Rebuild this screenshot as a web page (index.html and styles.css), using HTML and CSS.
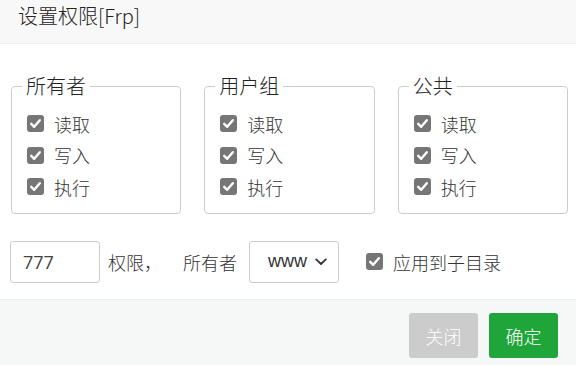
FILE: index.html
```html
<!DOCTYPE html>
<html lang="zh">
<head>
<meta charset="utf-8">
<link rel="stylesheet" href="styles.css">
</head>
<body>
<div class="dialog">
  <div class="header">设置权限[Frp]</div>
  <div class="content">
    <div class="groups">
      <fieldset class="group">
        <legend>所有者</legend>
        <div class="rows">
          <label class="row"><span class="cb"><svg viewBox="0 0 17 17" width="17" height="17"><path d="M4.2 8.8 L7.2 11.8 L12.8 5.2" fill="none" stroke="#fff" stroke-width="2.4" stroke-linecap="round" stroke-linejoin="round"/></svg></span>读取</label>
          <label class="row"><span class="cb"><svg viewBox="0 0 17 17" width="17" height="17"><path d="M4.2 8.8 L7.2 11.8 L12.8 5.2" fill="none" stroke="#fff" stroke-width="2.4" stroke-linecap="round" stroke-linejoin="round"/></svg></span>写入</label>
          <label class="row"><span class="cb"><svg viewBox="0 0 17 17" width="17" height="17"><path d="M4.2 8.8 L7.2 11.8 L12.8 5.2" fill="none" stroke="#fff" stroke-width="2.4" stroke-linecap="round" stroke-linejoin="round"/></svg></span>执行</label>
        </div>
      </fieldset>
      <fieldset class="group">
        <legend>用户组</legend>
        <div class="rows">
          <label class="row"><span class="cb"><svg viewBox="0 0 17 17" width="17" height="17"><path d="M4.2 8.8 L7.2 11.8 L12.8 5.2" fill="none" stroke="#fff" stroke-width="2.4" stroke-linecap="round" stroke-linejoin="round"/></svg></span>读取</label>
          <label class="row"><span class="cb"><svg viewBox="0 0 17 17" width="17" height="17"><path d="M4.2 8.8 L7.2 11.8 L12.8 5.2" fill="none" stroke="#fff" stroke-width="2.4" stroke-linecap="round" stroke-linejoin="round"/></svg></span>写入</label>
          <label class="row"><span class="cb"><svg viewBox="0 0 17 17" width="17" height="17"><path d="M4.2 8.8 L7.2 11.8 L12.8 5.2" fill="none" stroke="#fff" stroke-width="2.4" stroke-linecap="round" stroke-linejoin="round"/></svg></span>执行</label>
        </div>
      </fieldset>
      <fieldset class="group">
        <legend>公共</legend>
        <div class="rows">
          <label class="row"><span class="cb"><svg viewBox="0 0 17 17" width="17" height="17"><path d="M4.2 8.8 L7.2 11.8 L12.8 5.2" fill="none" stroke="#fff" stroke-width="2.4" stroke-linecap="round" stroke-linejoin="round"/></svg></span>读取</label>
          <label class="row"><span class="cb"><svg viewBox="0 0 17 17" width="17" height="17"><path d="M4.2 8.8 L7.2 11.8 L12.8 5.2" fill="none" stroke="#fff" stroke-width="2.4" stroke-linecap="round" stroke-linejoin="round"/></svg></span>写入</label>
          <label class="row"><span class="cb"><svg viewBox="0 0 17 17" width="17" height="17"><path d="M4.2 8.8 L7.2 11.8 L12.8 5.2" fill="none" stroke="#fff" stroke-width="2.4" stroke-linecap="round" stroke-linejoin="round"/></svg></span>执行</label>
        </div>
      </fieldset>
    </div>
    <div class="bottom">
      <div class="input">777</div>
      <span class="txt perm">权限，</span>
      <span class="txt owner">所有者</span>
      <div class="select"><span>www</span><svg class="chev" viewBox="0 0 12 8" width="12" height="8"><path d="M1.2 1.4 L6 6 L10.8 1.4" fill="none" stroke="#333" stroke-width="1.8" stroke-linecap="round" stroke-linejoin="round"/></svg></div>
      <label class="row sub"><span class="cb"><svg viewBox="0 0 17 17" width="17" height="17"><path d="M4.2 8.8 L7.2 11.8 L12.8 5.2" fill="none" stroke="#fff" stroke-width="2.4" stroke-linecap="round" stroke-linejoin="round"/></svg></span>应用到子目录</label>
    </div>
  </div>
  <div class="footer">
    <button class="btn btn-close">关闭</button>
    <button class="btn btn-ok">确定</button>
  </div>
</div>
</body>
</html>
```
FILE: styles.css
```css
html, body {
  margin: 0;
  padding: 0;
  background: #fff;
}
body {
  font-family: "Noto Sans CJK SC", "Noto Sans", sans-serif;
  font-weight: 300;
  color: #333;
  width: 576px;
  height: 365px;
  overflow: hidden;
}
.dialog {
  display: flex;
  flex-direction: column;
  height: 365px;
}
.header {
  height: 43px;
  line-height: 31px;
  padding: 0 18px;
  font-size: 20px;
  color: #222;
  background: #f8f8f8;
  border-bottom: 1px solid #eee;
}
.content {
  padding: 29px 8px 13px 11px;
  flex: 1;
}
.groups {
  display: flex;
  gap: 23px;
}
.group {
  box-sizing: border-box;
  width: 171px;
  margin: 0;
  padding: 0 10px 10px;
  border: 1px solid #ccc;
  border-radius: 4px;
}
.group legend {
  font-size: 20px;
  line-height: 26px;
  padding: 0 4px;
  color: #222;
}
.rows {
  padding: 9px 0 0 5px;
  display: flex;
  flex-direction: column;
}
.row {
  display: flex;
  align-items: center;
  height: 31.5px;
  font-size: 18px;
  color: #333;
}
.cb {
  width: 17px;
  height: 17px;
  border-radius: 3px;
  background: #767676;
  margin-right: 10px;
  display: flex;
}
.bottom {
  display: flex;
  align-items: center;
  margin-top: 27px;
  margin-left: -1px;
}
.input {
  box-sizing: border-box;
  width: 90px;
  height: 42px;
  border: 1px solid #ccc;
  border-radius: 3px;
  padding-left: 12px;
  font-size: 18px;
  line-height: 40px;
  color: #444;
  font-family: "Open Sans", "Noto Sans", sans-serif;
  font-weight: 400;
}
.txt {
  font-size: 18px;
}
.perm {
  margin-left: 8px;
}
.owner {
  margin-left: 21px;
}
.select {
  box-sizing: border-box;
  width: 90px;
  height: 42px;
  border: 1px solid #ccc;
  border-radius: 3px;
  margin-left: 12px;
  display: flex;
  align-items: center;
  padding-left: 18px;
  font-size: 18px;
  color: #333;
}
.select span {
  font-family: "Liberation Sans", Arial, sans-serif;
  font-weight: 400;
}
.chev {
  margin-left: 8px;
}
.sub {
  margin-left: 27px;
  height: auto;
}
.footer {
  height: 66px;
  box-sizing: border-box;
  background: #f6f8f8;
  border-top: 1px solid #eee;
  display: flex;
  justify-content: flex-end;
  align-items: flex-start;
  padding: 13px 18px 0 0;
  gap: 11px;
}
.btn {
  width: 69px;
  height: 45px;
  border: none;
  border-radius: 3px;
  color: #fff;
  font-size: 18px;
  font-family: "Noto Sans CJK SC", sans-serif;
  font-weight: 300;
  padding: 0;
}
.btn-close {
  background: #ccc;
}
.btn-ok {
  background: #20a53a;
}
```
